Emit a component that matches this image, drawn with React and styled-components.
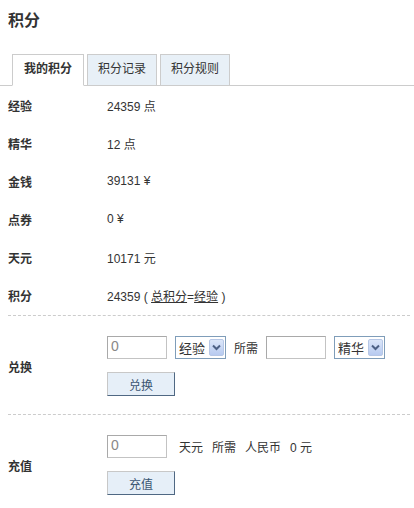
import React from 'react';
import styled, { createGlobalStyle } from 'styled-components';

const GlobalStyle = createGlobalStyle`
  body {
    margin: 0;
    background: #fff;
    font-family: "Liberation Sans", "Noto Sans CJK SC", sans-serif;
    font-size: 12px;
    color: #333;
  }
`;

const Page = styled.div`
  width: 414px;
`;

const Title = styled.h2`
  margin: 0;
  padding: 11px 8px 0;
  font-size: 16px;
  line-height: 20px;
  font-weight: bold;
  color: #333;
`;

const TabBar = styled.ul`
  display: flex;
  gap: 3px;
  margin: 23px 0 0;
  padding: 0 0 0 12px;
  list-style: none;
  border-bottom: 1px solid #ccc;
  height: 31px;
`;

const Tab = styled.li`
  box-sizing: border-box;
  height: 32px;
  padding: 0 ${p => (p.$active ? '11px' : '10px')};
  border: 1px solid #ccc;
  border-bottom-color: ${p => (p.$active ? '#fff' : '#ccc')};
  background: ${p => (p.$active ? '#fff' : '#e8f0f7')};
  font-weight: ${p => (p.$active ? 'bold' : 'normal')};
  line-height: 29px;
  color: #333;
`;

const Row = styled.div`
  display: flex;
  align-items: center;
  height: 38px;
  padding-left: 8px;
`;

const Label = styled.div`
  width: 99px;
  flex-shrink: 0;
  font-weight: bold;
  color: #333;
`;

const Value = styled.div`
  color: #333;
`;

const Link = styled.a`
  color: #333;
  text-decoration: underline;
`;

const Section = styled.div`
  display: flex;
  align-items: center;
  margin: ${p => (p.$first ? '1px' : '0')} 4px 0 8px;
  padding: 20px 0 18px;
  border-top: 1px dashed #ccc;
`;

const Controls = styled.div`
  display: flex;
  flex-direction: column;
  align-items: flex-start;
  gap: 13px;
`;

const Line = styled.div`
  display: flex;
  align-items: center;
  gap: ${p => p.$gap || 8}px;
  white-space: nowrap;
`;

const TextInput = styled.input`
  box-sizing: border-box;
  width: 60px;
  height: 23px;
  margin: 0;
  padding: 0 3px 4px;
  border: 1px solid #c3c3c3;
  border-top-color: #a9a9a9;
  border-left-color: #a9a9a9;
  font-family: "Liberation Sans", sans-serif;
  font-size: 14px;
  color: #888;
  line-height: 16px;
`;

const SelectBox = styled.div`
  display: flex;
  align-items: center;
  justify-content: space-between;
  box-sizing: border-box;
  width: ${p => p.$width}px;
  height: 23px;
  padding: 0 1px 0 3px;
  border: 1px solid #7f9db9;
  background: #fff;
  font-size: 13px;
  color: #333;
  white-space: nowrap;
`;

const ArrowButton = styled.span`
  display: flex;
  align-items: center;
  justify-content: center;
  box-sizing: border-box;
  width: 15px;
  height: 17px;
  border: 1px solid #b6c7e6;
  border-radius: 2px;
  background: linear-gradient(#dbe6f9, #b7caf0);
`;

const Button = styled.button`
  box-sizing: border-box;
  width: 68px;
  height: 24px;
  margin: 0;
  padding: 0;
  border: 1px solid #c8c8c8;
  border-right-color: #4f6883;
  border-bottom-color: #4f6883;
  background: #e6eff8;
  font-family: "Liberation Sans", "Noto Sans CJK SC", sans-serif;
  font-size: 12px;
  color: #3a5572;
`;

const Words = styled.div`
  display: flex;
  gap: 9px;
  color: #333;
`;

function Select({ label, width }) {
  return (
    <SelectBox $width={width}>
      <span>{label}</span>
      <ArrowButton>
        <svg width="9" height="7" viewBox="0 0 9 7">
          <path d="M1 1.5 L4.5 5 L8 1.5" fill="none" stroke="#4d6185" strokeWidth="2" />
        </svg>
      </ArrowButton>
    </SelectBox>
  );
}

const stats = [
  { label: '经验', value: '24359 点' },
  { label: '精华', value: '12 点' },
  { label: '金钱', value: '39131 ¥' },
  { label: '点券', value: '0 ¥' },
  { label: '天元', value: '10171 元' },
];

export default function App() {
  return (
    <Page>
      <GlobalStyle />
      <Title>积分</Title>
      <TabBar>
        <Tab $active>我的积分</Tab>
        <Tab>积分记录</Tab>
        <Tab>积分规则</Tab>
      </TabBar>

      {stats.map(s => (
        <Row key={s.label}>
          <Label>{s.label}</Label>
          <Value>{s.value}</Value>
        </Row>
      ))}
      <Row>
        <Label>积分</Label>
        <Value>
          24359 ( <Link>总积分</Link>=<Link>经验</Link> )
        </Value>
      </Row>

      <Section $first>
        <Label>兑换</Label>
        <Controls>
          <Line>
            <TextInput defaultValue="0" />
            <Select label="经验" width={51} />
            <span>所需</span>
            <TextInput defaultValue="" />
            <Select label="精华" width={51} />
          </Line>
          <Button>兑换</Button>
        </Controls>
      </Section>

      <Section>
        <Label>充值</Label>
        <Controls>
          <Line $gap={12}>
            <TextInput defaultValue="0" />
            <Words>
              <span>天元</span>
              <span>所需</span>
              <span>人民币</span>
              <span>0 元</span>
            </Words>
          </Line>
          <Button>充值</Button>
        </Controls>
      </Section>
    </Page>
  );
}
